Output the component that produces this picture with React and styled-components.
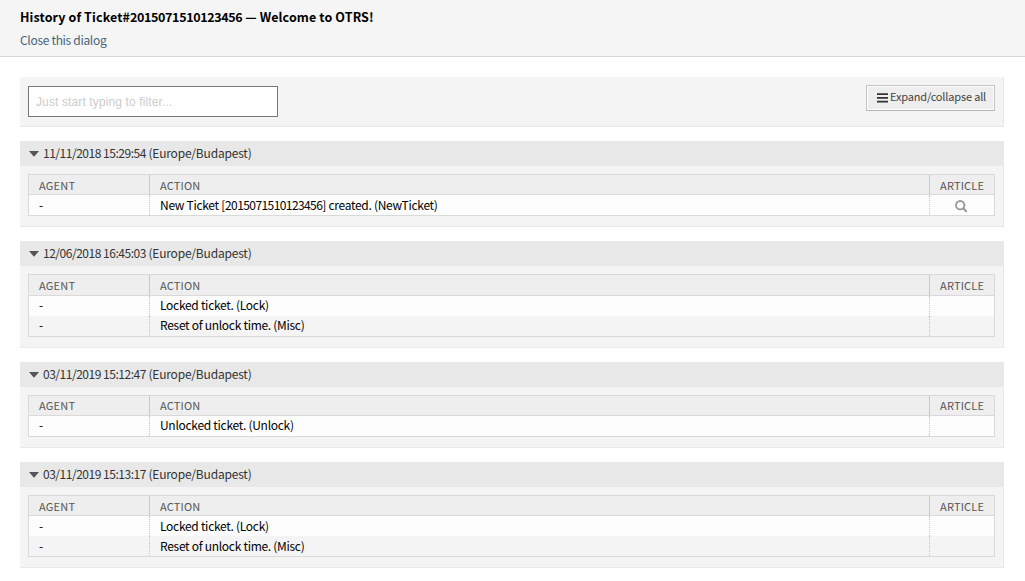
import React, { useState } from "react";
import styled, { createGlobalStyle, css } from "styled-components";

const GlobalStyle = createGlobalStyle`
  *, *::before, *::after { box-sizing: border-box; }
  body {
    margin: 0;
    background: #fff;
    color: #000;
    font-family: "Noto Sans CJK SC", "Noto Sans", sans-serif;
    font-size: 12px;
    line-height: 20px;
  }
`;

const Header = styled.header`
  height: 57px;
  padding: 7px 20px 0;
  background: #f5f5f5;
  border-bottom: 1px solid #d7d7d7;
`;

const Digits = styled.span`
  letter-spacing: ${(p) => p.$spacing || -0.48}px;
`;

const Title = styled.h1`
  margin: 0;
  font-size: 12.5px;
  letter-spacing: 0.11px;
  font-weight: 700;
  line-height: 20px;
  white-space: nowrap;
`;

const CloseLink = styled.a`
  display: block;
  width: max-content;
  margin-top: 3px;
  color: #47637a;
  letter-spacing: -0.31px;
  text-decoration: none;
`;

const Content = styled.main`
  display: flex;
  flex-direction: column;
  gap: 14px;
  padding: 20px 21px 13px 20px;
`;

const panel = css`
  background: #f4f4f4;
  border-right: 1px solid #e8e8e8;
  border-bottom: 1px solid #e8e8e8;
  border-radius: 1px;
`;

const ControlBar = styled.section`
  ${panel}
  display: flex;
  justify-content: space-between;
  align-items: flex-start;
  height: 50px;
  padding: 8px 8px 0;
`;

const FilterInput = styled.input`
  width: 250px;
  height: 31px;
  margin-top: 1px;
  padding: 1px 7px 0;
  border: 1px solid #777;
  border-radius: 0;
  background: #fff;
  font-family: "Liberation Sans", Arial, sans-serif;
  font-size: 12px;
  letter-spacing: 0.12px;
  outline: none;

  &::placeholder { color: #ccc; opacity: 1; }
`;

const ExpandButton = styled.button`
  display: flex;
  align-items: center;
  gap: 2px;
  width: 129px;
  height: 26px;
  padding: 0 0 5px 10px;
  border: 1px solid #c4c4c4;
  border-bottom-color: #b4b4b4;
  box-shadow: inset 0 0 0 1px #fff;
  background: #eee;
  color: #444;
  font-family: inherit;
  font-size: 11px;
  letter-spacing: -0.17px;
  white-space: nowrap;

  svg { margin-top: 4px; }
`;

const Widget = styled.section`
  ${panel}
  height: ${(p) => p.$height}px;
`;

const WidgetHeader = styled.h2`
  display: flex;
  align-items: center;
  height: 25px;
  margin: 0 -1px 0 0;
  padding: 0 9px 1px;
  border-radius: 1px 1px 0 0;
  background: #e8e8e8;
  color: #333;
  font-size: 12px;
  font-weight: 400;
  letter-spacing: -0.19px;
  white-space: pre;

  svg { margin: 1px 4px 0 0; }
`;

const Table = styled.div`
  margin: 8px 8px 0;
  border: 1px solid #d9d9d9;
`;

const Row = styled.div`
  display: grid;
  grid-template-columns: 120px 1fr 65px;
  height: 20px;
  background: ${(p) => (p.$even ? "#f4f4f4" : "#fdfdfd")};
`;

const HeadRow = styled(Row)`
  height: ${(p) => p.$height}px;
  background: #eee;
  border-bottom: 1px solid #d9d9d9;
`;

const Cell = styled.div`
  height: 100%;
  padding: ${(p) => p.$shift || 0}px 10px 0;
  line-height: 18px;
  letter-spacing: -0.29px;
  white-space: nowrap;

  & + & { border-left: 1px dotted #c4c4c4; }
`;

const HeadCell = styled(Cell)`
  color: #555;
  font-size: 11px;
  letter-spacing: 0.2px;

  & + & { border-left: 1px solid #c8c8c8; }
`;

const ZoomIcon = styled.svg`
  display: block;
  margin: 4px 0 0 15px;
`;

const groups = [
  {
    date: "11/11/2018 15:29:54",
    height: 86, headHeight: 20, headShift: 1, rowShift: 1,
    rows: [{ action: "New Ticket [2015071510123456] created. (NewTicket)", article: true }],
  },
  {
    date: "12/06/2018 16:45:03",
    height: 107, headHeight: 21, headShift: 1, rowShift: 0,
    rows: [{ action: "Locked ticket. (Lock)" }, { action: "Reset of unlock time. (Misc)" }],
  },
  {
    date: "03/11/2019 15:12:47",
    height: 86, headHeight: 20, headShift: 0, rowShift: 0,
    rows: [{ action: "Unlocked ticket. (Unlock)" }],
  },
  {
    date: "03/11/2019 15:13:17",
    height: 106, headHeight: 20, headShift: 1, rowShift: 1,
    rows: [{ action: "Locked ticket. (Lock)" }, { action: "Reset of unlock time. (Misc)" }],
  },
];

// Sets long runs of digits tighter than the words around them.
function ActionText({ text }) {
  return text.split(/(\d+)/).map((part, i) => (i % 2 ? <Digits key={i} $spacing={-0.58}>{part}</Digits> : part));
}

function Caret() {
  return (
    <svg width="10" height="6" viewBox="0 0 10 6" aria-hidden="true">
      <path d="M0 0H10L5.5 5.2Q5 5.8 4.5 5.2Z" fill="#555" />
    </svg>
  );
}

function Bars() {
  return (
    <svg width="11" height="10" viewBox="0 0 11 10" aria-hidden="true">
      <path d="M0 0.2H11V2H0ZM0 4H11V5.8H0ZM0 7.8H11V9.6H0Z" fill="#333" />
    </svg>
  );
}

function Magnifier() {
  return (
    <ZoomIcon width="13" height="13" viewBox="0 0 13 13" fill="none" stroke="#999" aria-label="View">
      <circle cx="5.2" cy="5.2" r="4.2" strokeWidth="1.9" />
      <path d="M8.3 8.3L11.2 11.2" strokeWidth="2.1" strokeLinecap="round" />
    </ZoomIcon>
  );
}

export default function App() {
  const [filter, setFilter] = useState("");
  const shown = (row) => row.action.toLowerCase().includes(filter.toLowerCase());
  return (
    <>
      <GlobalStyle />
      <Header>
        <Title>
          History of Ticket#<Digits $spacing={-0.36}>2015071510123456</Digits> — Welcome to OTRS!
        </Title>
        <CloseLink href="#">Close this dialog</CloseLink>
      </Header>
      <Content>
        <ControlBar>
          <FilterInput
            placeholder="Just start typing to filter..."
            value={filter}
            onChange={(e) => setFilter(e.target.value)}
          />
          <ExpandButton type="button"><Bars />Expand/collapse all</ExpandButton>
        </ControlBar>
        {groups.map((g) => (
          <Widget key={g.date} $height={g.height}>
            <WidgetHeader><Caret /><Digits>{g.date}</Digits>{" (Europe/Budapest)"}</WidgetHeader>
            <Table>
              <HeadRow $height={g.headHeight}>
                <HeadCell $shift={g.headShift}>AGENT</HeadCell>
                <HeadCell $shift={g.headShift}>ACTION</HeadCell>
                <HeadCell $shift={g.headShift}>ARTICLE</HeadCell>
              </HeadRow>
              {g.rows.filter(shown).map((row, i) => (
                <Row key={row.action} $even={i % 2 === 1}>
                  <Cell $shift={g.rowShift}>-</Cell>
                  <Cell $shift={g.rowShift}><ActionText text={row.action} /></Cell>
                  <Cell $shift={g.rowShift}>{row.article && <Magnifier />}</Cell>
                </Row>
              ))}
            </Table>
          </Widget>
        ))}
      </Content>
    </>
  );
}
